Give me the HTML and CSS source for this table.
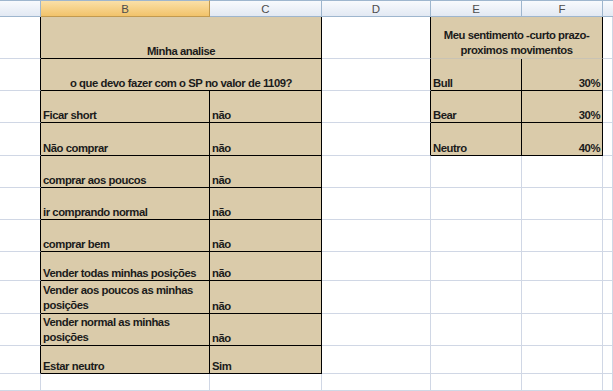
FILE: index.html
```html
<!DOCTYPE html>
<html lang="pt">
<head>
<meta charset="utf-8">
<title>Minha analise</title>
<link rel="stylesheet" href="styles.css">
</head>
<body>
<div class="sheet">
  <!-- header row -->
  <div class="h"></div>
  <div class="h sel">B</div>
  <div class="h">C</div>
  <div class="h">D</div>
  <div class="h">E</div>
  <div class="h">F</div>
  <div class="h last"></div>

  <!-- row 1 -->
  <div class="c edge"></div>
  <div class="t span2 center">Minha analise</div>
  <div class="c edge"></div>
  <div class="t span2 center soft wrap">Meu sentimento -curto prazo-<br>proximos movimentos</div>
  <div class="c"></div>

  <!-- row 2 -->
  <div class="c edge"></div>
  <div class="t span2 center">o que devo fazer com o SP no valor de 1109?</div>
  <div class="c edge"></div>
  <div class="t">Bull</div>
  <div class="t right">30%</div>
  <div class="c"></div>

  <!-- row 3 -->
  <div class="c edge"></div>
  <div class="t">Ficar short</div>
  <div class="t">não</div>
  <div class="c edge"></div>
  <div class="t">Bear</div>
  <div class="t right">30%</div>
  <div class="c"></div>

  <!-- row 4 -->
  <div class="c edge"></div>
  <div class="t">Não comprar</div>
  <div class="t">não</div>
  <div class="c edge"></div>
  <div class="t">Neutro</div>
  <div class="t right">40%</div>
  <div class="c"></div>

  <!-- row 5 -->
  <div class="c edge"></div>
  <div class="t">comprar aos poucos</div>
  <div class="t">não</div>
  <div class="c"></div><div class="c"></div><div class="c"></div><div class="c"></div>

  <!-- row 6 -->
  <div class="c edge"></div>
  <div class="t">ir comprando normal</div>
  <div class="t">não</div>
  <div class="c"></div><div class="c"></div><div class="c"></div><div class="c"></div>

  <!-- row 7 -->
  <div class="c edge"></div>
  <div class="t">comprar bem</div>
  <div class="t">não</div>
  <div class="c"></div><div class="c"></div><div class="c"></div><div class="c"></div>

  <!-- row 8 -->
  <div class="c edge"></div>
  <div class="t">Vender todas minhas posições</div>
  <div class="t">não</div>
  <div class="c"></div><div class="c"></div><div class="c"></div><div class="c"></div>

  <!-- row 9 -->
  <div class="c edge"></div>
  <div class="t wrap">Vender aos poucos as minhas<br>posições</div>
  <div class="t">não</div>
  <div class="c"></div><div class="c"></div><div class="c"></div><div class="c"></div>

  <!-- row 10 -->
  <div class="c edge"></div>
  <div class="t wrap">Vender normal as minhas<br>posições</div>
  <div class="t">não</div>
  <div class="c"></div><div class="c"></div><div class="c"></div><div class="c"></div>

  <!-- row 11 -->
  <div class="c edge"></div>
  <div class="t">Estar neutro</div>
  <div class="t">Sim</div>
  <div class="c"></div><div class="c"></div><div class="c"></div><div class="c"></div>

  <!-- row 12 -->
  <div class="c"></div><div class="c"></div><div class="c"></div><div class="c"></div><div class="c"></div><div class="c"></div><div class="c"></div>
</div>
</body>
</html>
```

FILE: styles.css
```css
* { box-sizing: border-box; }
html, body { margin: 0; padding: 0; background: #fff; }
body { width: 613px; height: 391px; overflow: hidden; }

.sheet {
  display: grid;
  grid-template-columns: 41px 169px 112px 109px 91px 81px 10px;
  grid-template-rows: 17px 42px 32px 32px 33px 32px 32px 32px 29px 33px 32px 28px 17px;
  width: 613px;
  font-family: "Liberation Sans", Arial, sans-serif;
  font-size: 11px;
}

.h {
  border-top: 1px solid #9EB6CE;
  border-right: 1px solid #9EB6CE;
  border-bottom: 1px solid #9EB6CE;
  background: linear-gradient(#F8FAFD, #E2E9F3);
  color: #4d4d4d;
  font-family: "Liberation Sans", Arial, sans-serif;
  font-size: 11.5px;
  display: flex;
  align-items: center;
  justify-content: center;
  padding-top: 1px;
}
.h.sel {
  background: linear-gradient(#FAE0A8, #F2C36A);
  border-right-color: #C29A4F;
  border-bottom-color: #C29A4F;
}
.h.last { border-right: none; }

.c {
  border-right: 1px solid #D0D7E5;
  border-bottom: 1px solid #D0D7E5;
}
.c.edge { border-right-color: #000; }

.t {
  background: #DACBAA;
  border-right: 1px solid #000;
  border-bottom: 1px solid #000;
  display: flex;
  align-items: flex-end;
  padding: 0 2px 0 2px;
  font-weight: bold;
  font-size: 11.3px;
  color: #1b1b1b;
  letter-spacing: -0.45px;
  white-space: nowrap;
  line-height: 14px;
}
.span2 { grid-column: span 2; }
.center { justify-content: center; text-align: center; }
.right { justify-content: flex-end; }
.wrap { white-space: normal; line-height: 15px; }
.soft { border-bottom-color: #C9C3B4; }
```
